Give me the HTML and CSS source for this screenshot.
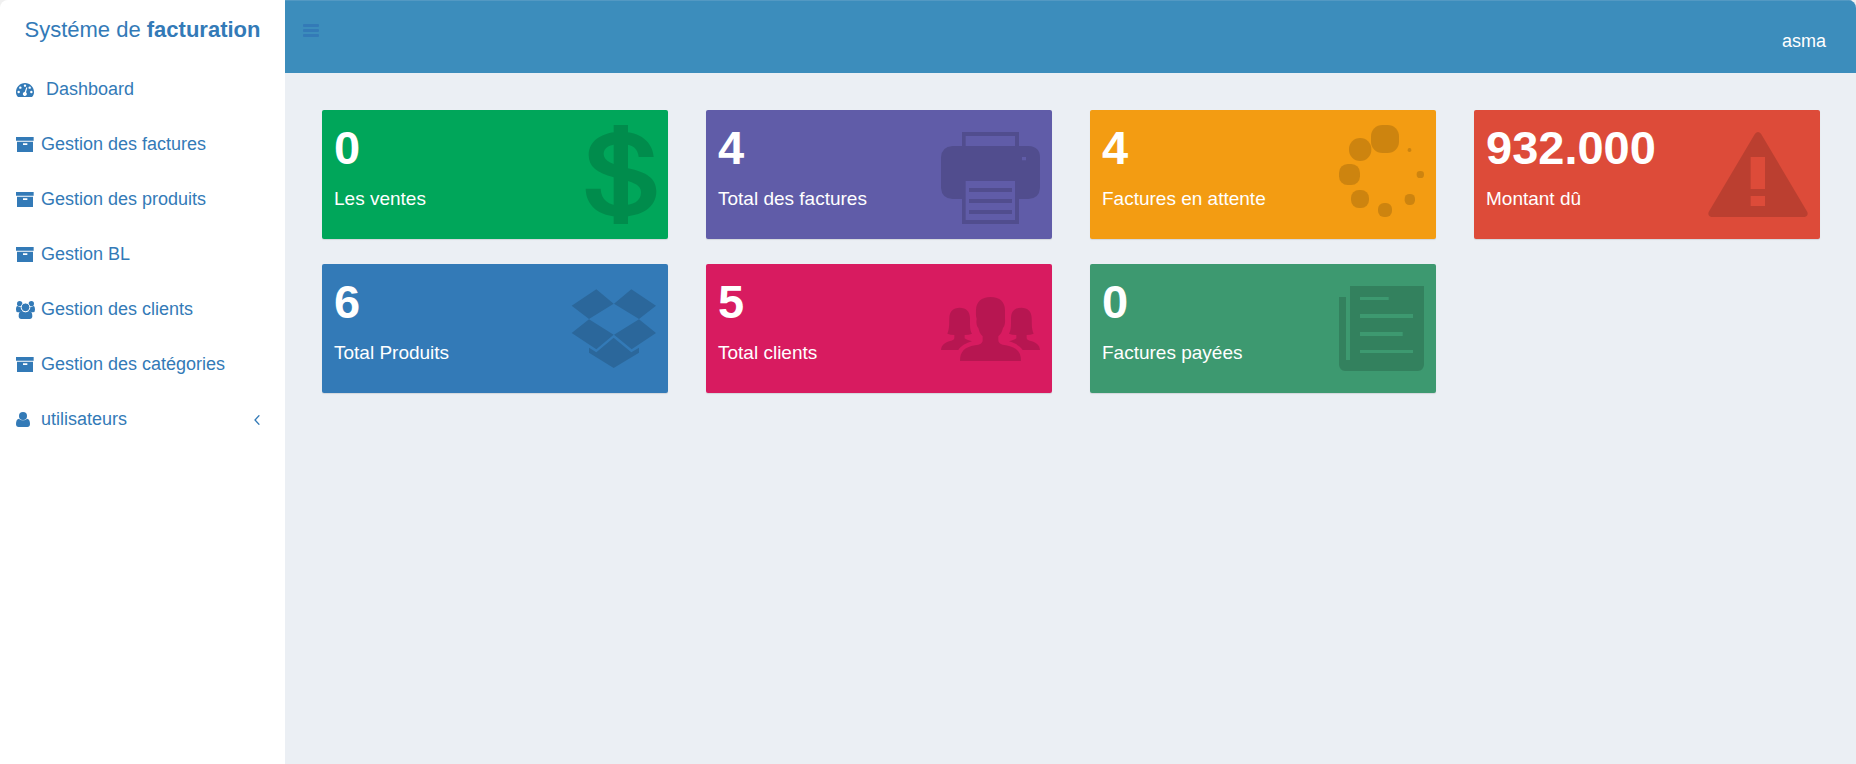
FILE: index.html
```html
<!DOCTYPE html>
<html lang="fr">
<head>
<meta charset="utf-8">
<title>Systéme de facturation</title>
<meta name="viewport" content="width=device-width, initial-scale=1">
<link rel="stylesheet" href="styles.css">
</head>
<body>
<svg class="defs" aria-hidden="true">
  <symbol id="archive" viewBox="0 0 54 45">
    <path d="M0 0h53v11H0zM3 14h48v31H3zM21 19v5h13v-5z" fill-rule="evenodd"/>
  </symbol>
</svg>
<div class="app">
  <aside class="sidebar">
    <a class="brand" href="#">Systéme de <b>facturation</b></a>
    <nav>
      <ul class="menu">
        <li><a class="menu-link menu-link-home" href="#">
          <svg class="icon" width="18" height="14" viewBox="0 0 54 42" aria-hidden="true"><path d="M27 0C12 0 0 12 0 27c0 5 1 9 4 13q1 2 3 2h40q2 0 3-2c3-4 4-8 4-13C54 12 42 0 27 0z"/><g fill="#fff"><circle cx="8" cy="27" r="3.6"/><circle cx="13" cy="14" r="3.6"/><circle cx="27" cy="8" r="3.6"/><circle cx="41" cy="14" r="3.6"/><circle cx="46" cy="27" r="3.6"/><path d="M31 13l3 1-4 14a6 6 0 1 1-4-1z"/></g></svg>
          <span>Dashboard</span></a></li>
        <li><a class="menu-link" href="#"><svg class="icon" width="18" height="15" aria-hidden="true"><use href="#archive"/></svg><span>Gestion des factures</span></a></li>
        <li><a class="menu-link" href="#"><svg class="icon" width="18" height="15" aria-hidden="true"><use href="#archive"/></svg><span>Gestion des produits</span></a></li>
        <li><a class="menu-link" href="#"><svg class="icon" width="18" height="15" aria-hidden="true"><use href="#archive"/></svg><span>Gestion BL</span></a></li>
        <li><a class="menu-link" href="#">
          <svg class="icon" width="19" height="18" viewBox="0 0 57 54" aria-hidden="true"><circle cx="11" cy="8" r="8"/><circle cx="46" cy="8" r="8"/><path d="M0 26c0-8 2-11 5-11 5 4 10 4 14 1-3 6-2 10 1 15-4 0-7 1-9 3H6q-6 0-6-8zM57 26c0-8-2-11-5-11-5 4-10 4-14 1 3 6 2 10-1 15 4 0 7 1 9 3h5q6 0 6-8z"/><path d="M8 46c0-10 3-16 10-16 7 5 14 5 21 0 7 0 10 6 10 16 0 5-3 8-8 8H16c-5 0-8-3-8-8z"/><circle cx="28.500" cy="19" r="13" stroke="#fff" stroke-width="3"/></svg>
          <span>Gestion des clients</span></a></li>
        <li><a class="menu-link" href="#"><svg class="icon" width="18" height="15" aria-hidden="true"><use href="#archive"/></svg><span>Gestion des catégories</span></a></li>
        <li><a class="menu-link" href="#">
          <svg class="icon" width="14" height="15" viewBox="0 0 42 45" aria-hidden="true"><circle cx="21" cy="12" r="12"/><path d="M0 36c0-10 3-15 9-16 7 6 17 6 24 0 6 1 9 6 9 16 0 6-3 9-8 9H8c-5 0-8-3-8-9z"/></svg>
          <span>utilisateurs</span>
          <svg class="chevron" width="6" height="10" viewBox="0 0 18 30" aria-hidden="true"><path d="M16 1L3 15l13 14" fill="none" stroke="currentColor" stroke-width="4"/></svg></a></li>
      </ul>
    </nav>
  </aside>
  <div class="page">
    <header class="topbar">
      <button class="toggle" type="button" aria-label="Basculer le menu">
        <svg width="16" height="13" viewBox="0 0 48 39" aria-hidden="true"><path d="M2 0h44l2 2v5l-2 2H2L0 7V2zM2 15h44l2 2v5l-2 2H2l-2-2v-5zM2 30h44l2 2v5l-2 2H2l-2-2v-5z"/></svg>
      </button>
      <a class="user" href="#">asma</a>
    </header>
    <main class="cards">
      <section class="card green">
        <div><h3>0</h3><p>Les ventes</p></div>
        <svg class="art" viewBox="738 30 300 387" aria-hidden="true"><path d="M911 75h43v297h-43z"/><path d="M1031 171H986C984 148 970 132 933 132C900 132 881 143 881 162C881 182 905 193 954 205C1010 217 1039 235 1039 274C1039 322 995 350 933 350C865 350 828 315 827 266H872C874 300 895 316 933 316C970 316 993 304 993 277C993 256 975 247 911 232C860 219 836 199 836 165C836 120 880 95 933 95C990 95 1028 125 1031 171Z"/></svg>
      </section>
      <section class="card purple">
        <div><h3>4</h3><p>Total des factures</p></div>
        <svg class="art" viewBox="720 30 300 387" aria-hidden="true"><path fill-rule="evenodd" d="M786 96H957V138H986Q1020 140 1020 172V264Q1018 295 986 297H957V372H786V297H757Q725 295 723 264V172Q725 140 757 138H786ZM797 108V138H945V108ZM797 243V360H945V243ZM966 171V181H978V171Z"/><path d="M807 264h129v12H807zM807 297h129v12H807zM807 330h129v12H807z"/></svg>
      </section>
      <section class="card yellow">
        <div><h3>4</h3><p>Factures en attente</p></div>
        <svg class="art" viewBox="732 30 300 387" aria-hidden="true"><rect x="873" y="75" width="84" height="84" rx="34"/><rect x="807" y="114" width="67" height="69" rx="33"/><rect x="777" y="192" width="63" height="63" rx="26"/><rect x="813" y="270" width="54" height="54" rx="24"/><rect x="894" y="309" width="42" height="42" rx="18"/><rect x="974" y="282" width="31" height="33" rx="14"/><rect x="1010" y="213" width="22" height="21" rx="10"/><rect x="983" y="144" width="11" height="12" rx="5"/></svg>
      </section>
      <section class="card red">
        <div><h3>932.000</h3><p>Montant dû</p></div>
        <svg class="art" viewBox="744 30 300 387" aria-hidden="true"><path fill-rule="evenodd" d="M885 101Q894 91 903 101L1042 336Q1046 348 1034 351H754Q742 348 746 336ZM872 171V267H915V171ZM872 288V318H915V288Z"/></svg>
      </section>
      <section class="card blue">
        <div><h3>6</h3><p>Total Produits</p></div>
        <svg class="art" viewBox="738 27 300 387" aria-hidden="true"><path d="M859 103L911 146 837 192 785 152ZM964 103L1038 152 987 192 912 146ZM837 193L911 239 859 283 785 234ZM987 193L1038 234 965 283 912 239ZM911 248L964 292 987 278V293L911 339 837 293V278L859 292Z"/></svg>
      </section>
      <section class="card maroon">
        <div><h3>5</h3><p>Total clients</p></div>
        <svg class="art" viewBox="720 27 300 387" aria-hidden="true"><path d="M872 126C900 126 915 142 915 165V192C916 204 914 213 909 219C906 230 903 237 895 244V256C896 266 903 269 918 271C950 277 963 290 963 318H780C780 290 793 277 825 271C841 269 847 266 848 256V244C840 237 838 230 835 219C830 213 828 204 830 192C827 184 828 176 828 165C828 142 844 126 872 126Z"/><path d="M779 158C799 158 809 169 810 188C810 210 809 224 816 236Q808 240 794 240V250Q799 255 816 259C798 265 784 271 775 285H723C724 269 735 261 754 257Q762 255 763 250V240Q751 240 742 236C749 220 747 205 748 188C749 169 759 158 779 158Z"/><path d="M964 158C984 158 994 169 995 188C996 205 994 220 1001 236Q992 240 980 240V250Q981 255 989 257C1008 261 1019 269 1020 285H968C959 271 945 265 927 259Q944 255 949 250V240Q935 240 927 236C934 224 933 210 933 188C934 169 944 158 964 158Z"/></svg>
      </section>
      <section class="card teal">
        <div><h3>0</h3><p>Factures payées</p></div>
        <svg class="art" viewBox="732 27 300 387" aria-hidden="true"><path fill-rule="evenodd" d="M810 93H1032V330Q1030 347 1014 348H795Q779 347 777 330V126H798V315H810ZM840 126V135H926V126ZM840 177V189H999V177ZM840 231V243H968V231ZM840 285V294H999V285Z"/></svg>
      </section>
    </main>
  </div>
</div>
</body>
</html>
```
FILE: styles.css
```css
* {
  box-sizing: border-box;
}

body {
  margin: 0;
  background: #f0f0f0;
  font-family: "Liberation Sans", Arial, sans-serif;
  font-size: 18px;
  color: #fff;
}

a {
  color: inherit;
  text-decoration: none;
}

svg {
  fill: currentColor;
}

.defs {
  position: absolute;
  width: 0;
  height: 0;
}

.app {
  display: grid;
  grid-template-columns: 285px 1fr;
  min-height: 100vh;
  border-radius: 8px 8px 0 0;
  overflow: hidden;
}

.sidebar {
  background: #fff;
  color: #337ab7;
}

.brand {
  display: block;
  font-size: 22px;
  line-height: 60px;
  height: 62px;
  text-align: center;
  white-space: nowrap;
}

.menu {
  list-style: none;
  margin: 0;
  padding: 0;
}

.menu-link {
  display: grid;
  grid-template-columns: 25px 1fr auto;
  align-items: center;
  height: 55px;
  padding: 0 25px 0 16px;
}

.menu-link-home {
  grid-template-columns: 30px 1fr;
}

.page {
  background: #ebeff4;
}

.topbar {
  display: flex;
  justify-content: space-between;
  align-items: flex-start;
  height: 73px;
  padding: 10px 30px 0 8px;
  background: #3c8dbc;
  border-top: 1px solid #5399c3;
}

.toggle {
  display: flex;
  padding: 13px 10px;
  border: 0;
  background: none;
  color: #337ab7;
  cursor: pointer;
}

.user {
  line-height: 60px;
}

.cards {
  display: grid;
  grid-template-columns: repeat(4, 1fr);
  gap: 25px 38px;
  padding: 37px 36px 37px 37px;
}

.card {
  display: flex;
  justify-content: space-between;
  padding: 0 12px;
  border-radius: 2px;
  box-shadow: 0 1px 1px rgba(0, 0, 0, 0.1);
}

.card h3 {
  margin: 12px 0 11px;
  font-size: 47px;
  line-height: 52px;
}

.card p {
  margin: 0;
  font-size: 19px;
  line-height: 27px;
}

.art {
  width: 100px;
  height: 129px;
  overflow: visible;
  fill: #000;
  opacity: 0.15;
}

.green { background: #00a65a; }
.purple { background: #605ca8; }
.yellow { background: #f39c12; }
.red { background: #dd4b39; }
.blue { background: #337ab7; }
.maroon { background: #d81b60; }
.teal { background: #3d9970; }
```
